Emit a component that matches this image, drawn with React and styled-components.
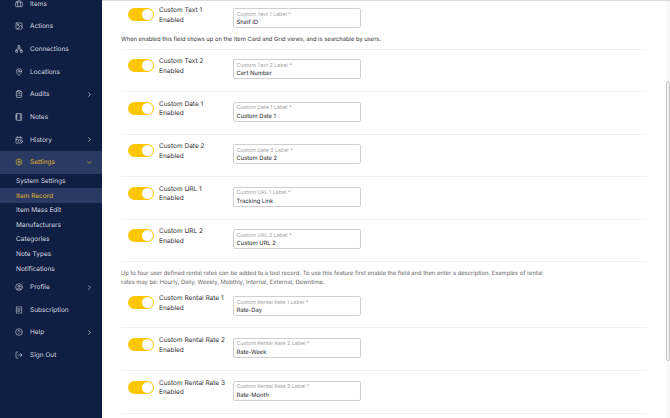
import React from 'react'
import styled, { createGlobalStyle } from 'styled-components'
import {
  Briefcase, Image, Network, MapPin, ClipboardList, Notebook, CalendarClock,
  Settings, ChevronRight, ChevronDown, CircleUser, ReceiptText, CircleHelp, LogOut
} from 'lucide-react'

const GlobalStyle = createGlobalStyle`
  html, body { margin: 0; padding: 0; height: 100%; overflow: hidden; background: #fff; }
  body {
    font-family: Inter, "Liberation Sans", sans-serif;
    text-rendering: geometricPrecision;
  }
`

const Page = styled.div`
  display: flex;
  width: 670px;
  height: 418px;
  overflow: hidden;
`

const Sidebar = styled.nav`
  flex: 0 0 102px;
  height: 418px;
  background: #0f1e42;
  overflow: hidden;
`

const NavList = styled.div`
  margin-top: -7.6px;
`

const NavItem = styled.div`
  display: flex;
  align-items: center;
  height: 22.67px;
  padding: 0 9px 0 15px;
  font-size: 6.5px;
  color: ${p => (p.$active ? '#e2b72e' : '#d3d7e0')};
  background: ${p => (p.$active ? '#2b3a62' : 'transparent')};
  svg { flex: none; }
`

const NavLabel = styled.span`
  flex: 1;
  margin-left: 7px;
`

const SubItem = styled.div`
  display: flex;
  align-items: center;
  height: 14.6px;
  padding-left: 16px;
  font-size: 6.5px;
  color: ${p => (p.$active ? '#e2b72e' : '#d3d7e0')};
  background: ${p => (p.$active ? '#2b3a62' : 'transparent')};
`

const Main = styled.main`
  flex: 1;
  display: flex;
  height: 418px;
  overflow: hidden;
  border-top: 1px solid #dcdcdc;
  box-sizing: border-box;
`

const Content = styled.div`
  flex: 0 0 526px;
  margin-left: 19px;
  margin-top: -1px;
`

const Row = styled.div`
  display: flex;
  align-items: flex-start;
  box-sizing: border-box;
  height: ${p => p.$height || 42.6}px;
  padding: ${p => p.$top || 9.5}px 0 0 7px;
  border-bottom: ${p => (p.$plain ? 'none' : '1px solid #f1f1f1')};
`

const Toggle = styled.div`
  display: flex;
  justify-content: flex-end;
  align-items: center;
  flex: none;
  box-sizing: border-box;
  width: 26px;
  height: 13px;
  padding: 1px;
  border-radius: 7px;
  background: #ffc700;
`

const Knob = styled.span`
  width: 11px;
  height: 11px;
  border-radius: 50%;
  background: #fff;
`

const ToggleText = styled.div`
  flex: 0 0 74px;
  margin-left: 5px;
  margin-top: -2px;
  font-size: 6.5px;
  line-height: 9.7px;
  color: #333;
`

const Field = styled.div`
  box-sizing: border-box;
  width: 127.5px;
  height: 20px;
  padding: 2.5px 2.5px 0;
  border: 1px solid #cfcfcf;
  border-radius: 2px;
  background: #fff;
`

const FieldLabel = styled.div`
  font-size: 5.3px;
  line-height: 6.5px;
  color: #a3a3a3;
`

const FieldValue = styled.div`
  margin-top: 1px;
  font-size: 5.8px;
  line-height: 7.5px;
  color: #222;
`

const Note = styled.p`
  margin: 0;
  font-size: 5.8px;
  line-height: 9px;
  color: ${p => p.$color};
  padding-top: ${p => p.$top}px;
`

const FirstBlock = styled.div`
  box-sizing: border-box;
  height: 49.5px;
  border-bottom: 1px solid #f1f1f1;
`

const RentalNote = styled.div`
  width: 424px;
`

const Track = styled.div`
  flex: none;
  width: 4px;
  height: 100%;
  margin-left: 19px;
  background: #fafafa;
  padding-top: 80px;
`

const Thumb = styled.div`
  box-sizing: border-box;
  width: 4px;
  height: 280px;
  border: 1px solid #c4c4c4;
  border-radius: 2px;
  background: #f4f4f4;
`

const topNav = [
  ['Items', Briefcase],
  ['Actions', Image],
  ['Connections', Network],
  ['Locations', MapPin],
  ['Audits', ClipboardList, true],
  ['Notes', Notebook],
  ['History', CalendarClock, true]
]

const subNav = ['System Settings', 'Item Record', 'Item Mass Edit', 'Manufacturers', 'Categories', 'Note Types', 'Notifications']

const bottomNav = [
  ['Profile', CircleUser, true],
  ['Subscription', ReceiptText],
  ['Help', CircleHelp, true],
  ['Sign Out', LogOut]
]

const fields = [
  ['Custom Text 2', 'Cert Number'],
  ['Custom Date 1', 'Custom Date 1'],
  ['Custom Date 2', 'Custom Date 2'],
  ['Custom URL 1', 'Tracking Link'],
  ['Custom URL 2', 'Custom URL 2']
]

const rates = [
  ['Custom Rental Rate 1', 'Rate-Day'],
  ['Custom Rental Rate 2', 'Rate-Week'],
  ['Custom Rental Rate 3', 'Rate-Month']
]

function NavEntry({ label, icon: Icon, arrow }) {
  return (
    <NavItem>
      <Icon size={8} strokeWidth={1.9} color="#c9cdd8" />
      <NavLabel>{label}</NavLabel>
      {arrow && <ChevronRight size={7} strokeWidth={2.4} />}
    </NavItem>
  )
}

function FieldContent({ name, value }) {
  return (
    <>
      <Toggle><Knob /></Toggle>
      <ToggleText>{name}<br />Enabled</ToggleText>
      <Field>
        <FieldLabel>{name} Label *</FieldLabel>
        <FieldValue>{value}</FieldValue>
      </Field>
    </>
  )
}

export default function App() {
  return (
    <Page>
      <GlobalStyle />
      <Sidebar>
        <NavList>
          {topNav.map(([label, icon, arrow]) => (
            <NavEntry key={label} label={label} icon={icon} arrow={arrow} />
          ))}
          <NavItem $active>
            <Settings size={8} strokeWidth={1.9} />
            <NavLabel>Settings</NavLabel>
            <ChevronDown size={7} strokeWidth={2.4} />
          </NavItem>
          {subNav.map(label => (
            <SubItem key={label} $active={label === 'Item Record'}>{label}</SubItem>
          ))}
          {bottomNav.map(([label, icon, arrow]) => (
            <NavEntry key={label} label={label} icon={icon} arrow={arrow} />
          ))}
        </NavList>
      </Sidebar>
      <Main>
        <Content>
          <FirstBlock>
            <Row $plain $height={30} $top={8}>
              <FieldContent name="Custom Text 1" value="Shelf ID" />
            </Row>
            <Note $color="#333" $top={5}>
              When enabled this field shows up on the Item Card and Grid views, and is searchable by users.
            </Note>
          </FirstBlock>
          {fields.map(([name, value]) => (
            <Row key={name}>
              <FieldContent name={name} value={value} />
            </Row>
          ))}
          <RentalNote>
            <Note $color="#666" $top={7}>
              Up to four user defined rental rates can be added to a tool record. To use this feature first enable the field and then enter a description. Examples of rental rates may be: Hourly, Daily, Weekly, Mobthly, Internal, External, Downtime.
            </Note>
          </RentalNote>
          <Row $height={41} $top={8.6}>
            <FieldContent name={rates[0][0]} value={rates[0][1]} />
          </Row>
          {rates.slice(1).map(([name, value]) => (
            <Row key={name}>
              <FieldContent name={name} value={value} />
            </Row>
          ))}
        </Content>
        <Track><Thumb /></Track>
      </Main>
    </Page>
  )
}
